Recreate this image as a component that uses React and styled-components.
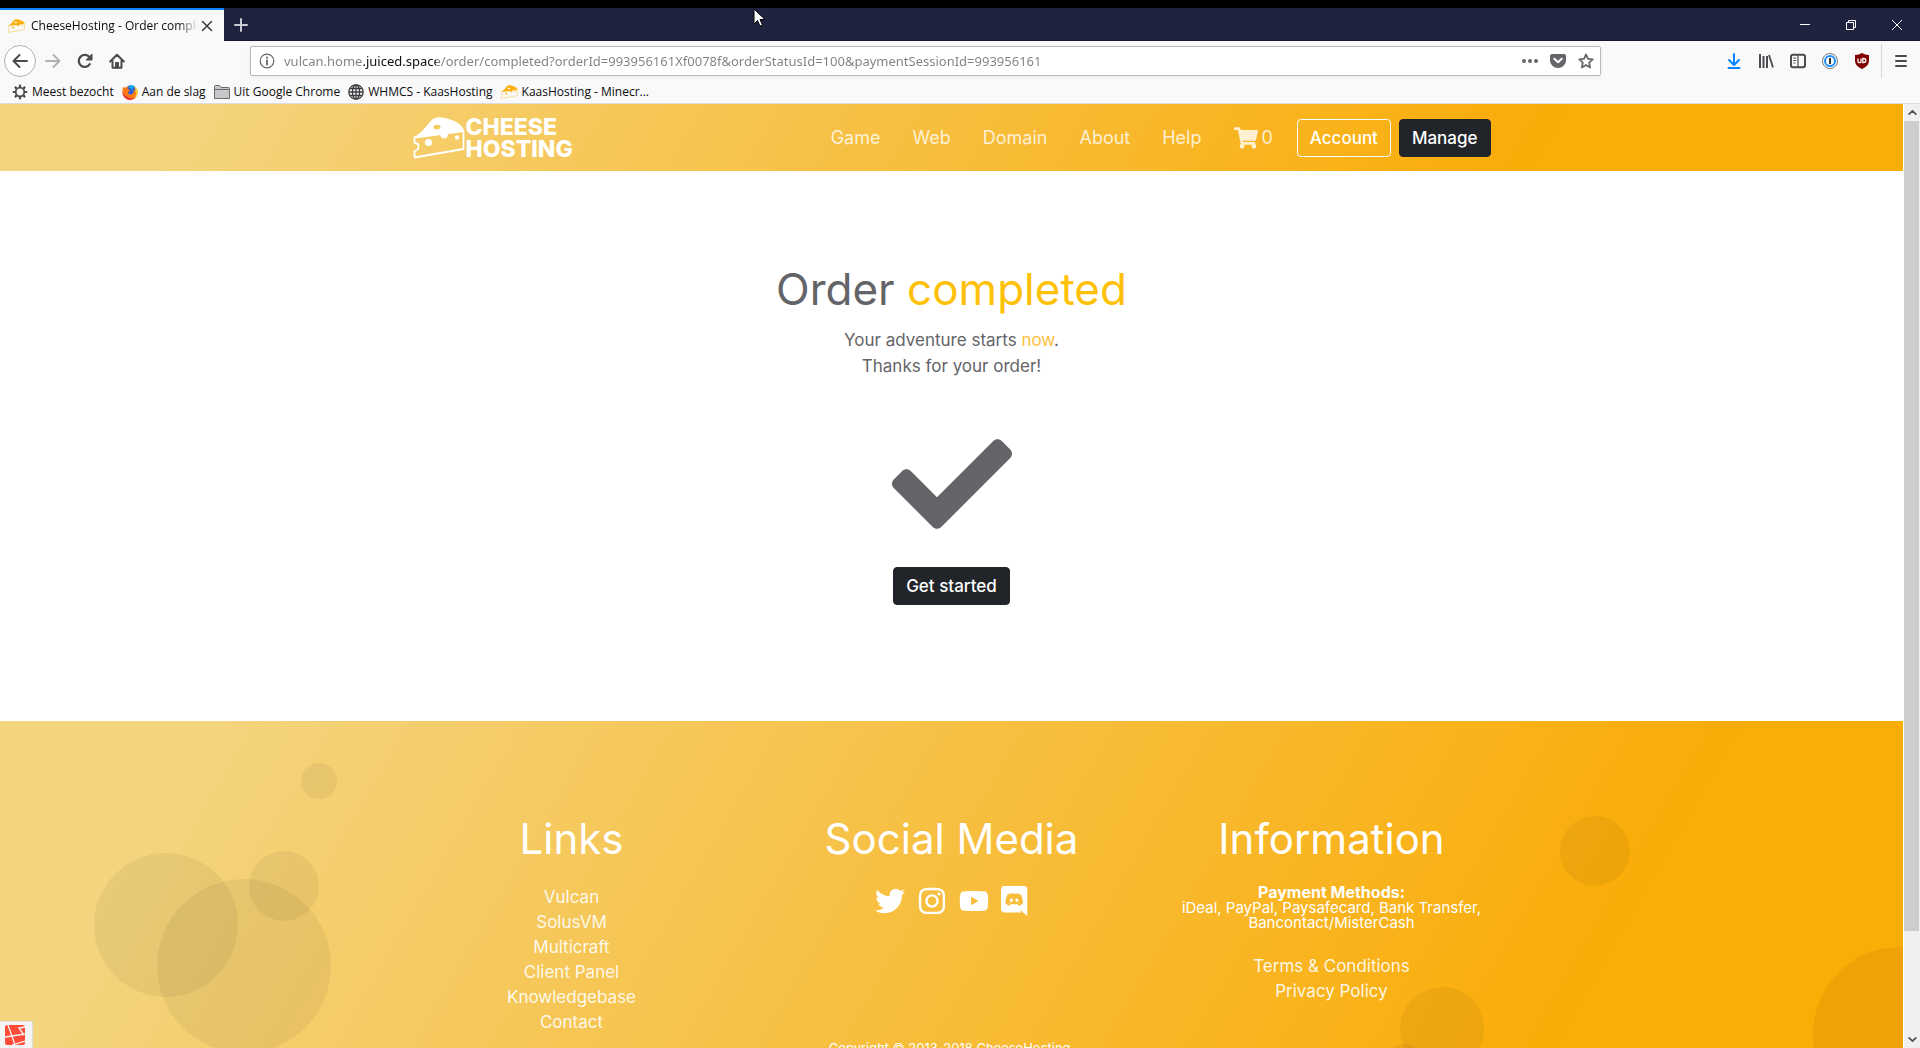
import React from "react";
import styled, { createGlobalStyle, css } from "styled-components";
import {
  FaCheck,
  FaShoppingCart,
  FaTwitter,
  FaInstagram,
  FaYoutube,
} from "react-icons/fa";

const uiFont = `"Open Sans", "Noto Sans", sans-serif`;
const siteFont = `Inter, "Open Sans", sans-serif`;
const cheeseGradient = "linear-gradient(120deg, #f4d47e 10%, #faac07 81%)";

const GlobalStyle = createGlobalStyle`
  * {
    box-sizing: border-box;
  }
  body {
    margin: 0;
    overflow: hidden;
  }
  h1, h2, p, ul {
    margin: 0;
    padding: 0;
    font-weight: 400;
  }
  ul {
    list-style: none;
  }
  a {
    color: inherit;
    text-decoration: none;
  }
  button {
    margin: 0;
    padding: 0;
    border: 0;
    background: none;
    color: inherit;
    font: inherit;
  }
  svg {
    display: block;
    flex: none;
  }
`;

/* browser window */

const Window = styled.div`
  display: flex;
  flex-direction: column;
  height: 100vh;
  border-top: 8px solid #000;
  background: #f9f9fa;
  font-family: ${uiFont};
  font-size: 12px;
  color: #0c0c0d;
`;

const TabStrip = styled.div`
  display: flex;
  flex: none;
  height: 33px;
  background: #202340;
  box-shadow: inset 0 -1px 0 #15172e;
`;

const Tab = styled.div`
  display: flex;
  align-items: center;
  width: 224px;
  padding: 0 8px;
  border-top: 2px solid #0a84ff;
  background: #f9f9fa;
`;

const TabTitle = styled.span`
  flex: 1;
  margin-left: 6px;
  overflow: hidden;
  white-space: nowrap;
  mask-image: linear-gradient(to left, transparent, #000 20px);
`;

const TabButton = styled.button`
  display: flex;
  align-items: center;
  justify-content: center;
  width: ${(props) => props.$width}px;
  color: ${(props) => props.$color};
`;

const WindowControls = styled.div`
  display: flex;
  margin-left: auto;
`;

const Toolbar = styled.div`
  display: flex;
  flex: none;
  align-items: center;
  height: 40px;
  padding: 0 3px 0 4px;
  color: #4a4a4f;
`;

const ToolButton = styled.button`
  display: flex;
  align-items: center;
  justify-content: center;
  width: 32px;
  height: 32px;
  opacity: ${(props) => (props.$faded ? 0.4 : 1)};
  ${(props) =>
    props.$round &&
    css`
      margin-right: 1px;
      border: 1px solid #b1b1b3;
      border-radius: 50%;
      background: #fff;
    `}
`;

const Spring = styled.div`
  flex: none;
  width: 117px;
`;

const Divider = styled.div`
  width: 1px;
  height: 34px;
  margin: 0 3px;
  background: #d7d7db;
`;

const UrlBar = styled.div`
  display: flex;
  flex: 1;
  align-items: center;
  height: 30px;
  padding: 0 0 0 8px;
  border: 1px solid #b8b8ba;
  border-radius: 2px;
  background: #fff;
  box-shadow: 0 1px 4px rgba(0, 0, 0, 0.06);
  color: #66666a;
`;

/* the registered domain is darker than the rest of the address */
const UrlInput = styled.input`
  flex: 1;
  margin-left: 9px;
  padding: 0;
  border: 0;
  outline: 0;
  background: linear-gradient(
    to right,
    #808084 78px,
    #0c0c0d 78px,
    #0c0c0d 152px,
    #808084 152px
  );
  background-clip: text;
  color: transparent;
  font: 13px "Noto Sans", sans-serif;
`;

const UrlAction = styled.button`
  display: flex;
  align-items: center;
  justify-content: center;
  width: 28px;
  height: 28px;
`;

const Bookmarks = styled.ul`
  display: flex;
  flex: none;
  gap: 8px;
  height: 23px;
  padding-left: 12px;
  border-bottom: 1px solid #dcdce0;
`;

const Bookmark = styled.a`
  display: flex;
  align-items: center;
  gap: 4px;
  height: 21px;
  white-space: nowrap;
`;

const Viewport = styled.div`
  display: flex;
  flex: 1;
  min-height: 0;
  overflow: hidden;
`;

const Scrollbar = styled.div`
  display: flex;
  flex: none;
  flex-direction: column;
  width: 17px;
  border-left: 1px solid #fff;
  background: #f0f0f0;
`;

const ScrollArrow = styled.button`
  display: flex;
  align-items: center;
  justify-content: center;
  height: 17px;
  color: #505050;
`;

const ScrollTrack = styled.div`
  flex: 1;
  padding-right: 1px;
`;

const ScrollThumb = styled.div`
  height: 89%;
  background: #cdcdcd;
`;

const Pointer = styled.svg`
  position: absolute;
  top: 8px;
  left: 753px;
`;

/* site */

const Page = styled.div`
  position: relative;
  flex: 1;
  background: #fff;
  font-family: ${siteFont};
  font-size: 17px;
  line-height: 26px;
  color: #636468;
`;

const Navbar = styled.header`
  height: 67px;
  background: ${cheeseGradient};
`;

const NavContainer = styled.div`
  display: flex;
  align-items: center;
  max-width: 1140px;
  height: 67px;
  margin: 0 auto;
  padding: 0 31px;
`;

const Brand = styled.a`
  display: flex;
  align-items: center;
  gap: 1px;
  margin-right: auto;
  color: #fff;
  font-size: 23px;
  font-weight: 800;
  line-height: 22px;
`;

const NavList = styled.ul`
  display: flex;
  gap: 32px;
  margin-right: 24px;
`;

const NavLink = styled.a`
  display: flex;
  align-items: center;
  gap: 4px;
  color: rgba(255, 255, 255, 0.8);
  font-size: 18px;
`;

const Button = styled.button`
  height: 38px;
  padding: 0 12px;
  border: 1px solid ${(props) => (props.$outline ? "#fff" : "#212529")};
  border-radius: 4px;
  background: ${(props) => (props.$outline ? "transparent" : "#212529")};
  color: #fff;
  font-weight: 500;
`;

const NavButtons = styled.div`
  display: flex;
  gap: 8px;
`;

const Main = styled.main`
  display: flex;
  flex-direction: column;
  align-items: center;
  padding: 92px 0 116px;
  text-align: center;
`;

const Title = styled.h1`
  margin-bottom: 12px;
  font-size: 44px;
  line-height: 52px;
`;

const Accent = styled.span`
  color: ${(props) => (props.$soft ? "#fdc040" : "#ffc107")};
`;

const CheckMark = styled(FaCheck)`
  margin: 45px 0 23px;
  font-size: 120px;
`;

const Footer = styled.footer`
  position: relative;
  padding: 93px 0 104px;
  overflow: hidden;
  background: ${cheeseGradient};
  color: #fff;
  text-align: center;
`;

const Bubble = styled.span`
  position: absolute;
  top: ${(props) => props.$y}px;
  left: ${(props) => props.$x}px;
  width: ${(props) => props.$size}px;
  height: ${(props) => props.$size}px;
  border-radius: 50%;
  background: rgba(0, 0, 0, 0.05);
`;

const Columns = styled.div`
  position: relative;
  display: grid;
  grid-template-columns: repeat(3, 1fr);
  max-width: 1140px;
  margin: 0 auto;
`;

const Heading = styled.h2`
  margin-bottom: 21px;
  font-size: 42px;
  line-height: 50px;
`;

const LinkList = styled.ul`
  line-height: 25px;
  color: rgba(255, 255, 255, 0.9);
`;

const Socials = styled.div`
  display: flex;
  justify-content: center;
  gap: 12px;
  padding-top: 1px;

  svg {
    width: auto;
    height: 30px;
  }
`;

const Payments = styled.p`
  margin: 0 30px 24px;
  font-size: 15px;
  line-height: 15px;

  strong {
    display: block;
    font-size: 16px;
  }
`;

const Copyright = styled.p`
  position: relative;
  margin-top: 3px;
  font-size: 13px;
  line-height: 20px;
`;

const DebugBadge = styled.button`
  position: fixed;
  bottom: 0;
  left: 0;
  width: 33px;
  height: 27px;
  padding: 3px 5px;
  border: 1px solid #ddd;
  border-width: 1px 1px 0 0;
  background: #f5f5f5;
`;

const Cheese = ({ width, height, rind = "#fff", body = "#fff", hole = "#f5cb62" }) => (
  <svg width={width} height={height} viewBox="0 0 52 42">
    <path d="M1.5 20.5V26c3 0 4 1.500 4 3.500s-1.500 4-4 4.500v6.500l49-8.500V14z" fill="none" stroke={body} strokeWidth="1.800" strokeLinejoin="round" />
    <path d="M1 20.500 8 15 C11 13 16 5 20 2 C23 0 28 -.5 32 1 C42 3 50 8 51 14 L35 16.500 C36 23 27 23 27.500 17.500 Z" fill={rind} />
    <ellipse cx="24" cy="10" rx="3.500" ry="2.300" fill={hole} />
    <circle cx="15.500" cy="25.500" r="3.600" fill={body} />
    <circle cx="44" cy="20.500" r="2.200" fill={body} />
  </svg>
);

const Favicon = () => (
  <Cheese width={17} height={14} rind="#fbb10f" body="#f9cc62" hole="#fff" />
);

const Stroke = ({ size = 16, width = 2, children }) => (
  <svg width={size} height={size} viewBox="0 0 16 16" fill="none" stroke="currentColor" strokeWidth={width} strokeLinecap="round" strokeLinejoin="round">
    {children}
  </svg>
);

const GearIcon = () => (
  <svg width="16" height="16" viewBox="0 0 16 16" fill="none" stroke="#4a4a4f">
    <circle cx="8" cy="8" r="4.300" strokeWidth="1.800" />
    <path
      strokeWidth="2.200"
      d="M8 .8V3M8 13v2.200M.8 8H3M13 8h2.200M2.900 2.900l1.600 1.600M11.500 11.500l1.600 1.600M2.900 13.100l1.600-1.600M11.500 4.500l1.600-1.600"
    />
  </svg>
);

const FirefoxIcon = () => (
  <svg width="16" height="16" viewBox="0 0 16 16">
    <circle cx="8.500" cy="7.500" r="6" fill="#2b5fd9" />
    <path d="M7 1.500c2-1 4.500-.5 6 1l-3 3c-1-1-2-1.500-3-1z" fill="#19a7f0" />
    <path d="M1.500 2.500C2 3.500 2.500 3.800 3.500 3.700c1-.8 2-1 3-.7L5.500 5l2.500 1c-.5 1.500-2 1.500-2 2.500 0 1.500 2 2.500 4 1.500 2-1 2-3 1-4.500 1.500.5 2 1.500 2.200 2.500.4-2 0-4-1.200-5.500C15 4 16 6.500 15.700 9c-.4 4-3.700 6.800-7.700 6.800S.5 12.500.4 8.500C.3 6 .7 4 1.500 2.500z" fill="#ff7a16" />
    <path d="M12.500 2.500C15 4 16 6.500 15.700 9c-.2 2-1.200 3.800-2.700 5 1-2.500 1.500-4.500.2-6 .4-2 .4-4-.7-5.500z" fill="#ffd23a" />
    <path d="M.5 8c.2 4.500 3.500 7.800 7.500 7.800 2 0 3.700-.6 5-1.800-5 1.500-10-.5-12.500-6z" fill="#e5233e" />
  </svg>
);

const FolderIcon = () => (
  <svg width="16" height="14" viewBox="0 0 16 14" fill="#c8c8ca" stroke="#6a6a6e">
    <path d="M.5 13.500V1.500q0-1 1-1h4l1.500 2h7.500q1 0 1 1v10z" />
    <path d="M.5 4.500h15" />
  </svg>
);

const GlobeIcon = () => (
  <svg width="16" height="16" viewBox="0 0 16 16" fill="none" stroke="#3e3e42" strokeWidth="1.300">
    <circle cx="8" cy="8" r="7.200" />
    <ellipse cx="8" cy="8" rx="3.600" ry="7.200" />
    <path d="M8 1v14M1 8h14M2 4.500h12M2 11.500h12" />
  </svg>
);

/* the older speech bubble logo, which the icon package has dropped */
const DiscordIcon = () => (
  <svg viewBox="0 0 448 512" fill="currentColor">
    <path d="M297.216 243.2c0 15.616-11.52 28.416-26.112 28.416-14.336 0-26.112-12.8-26.112-28.416s11.52-28.416 26.112-28.416c14.592 0 26.112 12.8 26.112 28.416zm-119.552-28.416c-14.592 0-26.112 12.8-26.112 28.416s11.776 28.416 26.112 28.416c14.592 0 26.112-12.8 26.112-28.416.256-15.616-11.52-28.416-26.112-28.416zM448 52.736V512c-64.494-56.994-43.868-38.128-118.784-107.776l13.568 47.36H52.48C23.552 451.584 0 428.032 0 398.848V52.736C0 23.552 23.552 0 52.48 0h343.04C424.448 0 448 23.552 448 52.736zm-72.96 242.688c0-82.432-36.864-149.248-36.864-149.248-36.864-27.648-71.936-26.88-71.936-26.88l-3.584 4.096c43.52 13.312 63.744 32.512 63.744 32.512-60.811-33.329-132.244-33.335-191.232-7.424-9.472 4.352-15.104 7.424-15.104 7.424s21.248-20.224 67.328-33.536l-2.56-3.072s-35.072-.768-71.936 26.88c0 0-36.864 66.816-36.864 149.248 0 0 21.504 37.12 78.08 38.912 0 0 9.472-11.52 17.152-21.248-32.512-9.728-44.8-30.208-44.8-30.208 3.766 2.636 9.976 6.053 10.496 6.4 43.21 24.198 104.588 32.126 159.744 8.96 8.96-3.328 18.944-8.192 29.44-15.104 0 0-12.8 20.992-46.336 30.464 7.68 9.728 16.896 20.736 16.896 20.736 56.576-1.792 78.336-38.912 78.336-38.912z" />
  </svg>
);

const bookmarks = [
  { label: "Meest bezocht", icon: <GearIcon /> },
  { label: "Aan de slag", icon: <FirefoxIcon /> },
  { label: "Uit Google Chrome", icon: <FolderIcon /> },
  { label: "WHMCS - KaasHosting", icon: <GlobeIcon /> },
  { label: "KaasHosting - Minecr...", icon: <Favicon /> },
];

const navItems = ["Game", "Web", "Domain", "About", "Help"];

const footerLinks = [
  "Vulcan",
  "SolusVM",
  "Multicraft",
  "Client Panel",
  "Knowledgebase",
  "Contact",
];

const bubbles = [
  { x: 301, y: 42, size: 36 },
  { x: 94, y: 132, size: 144 },
  { x: 249, y: 130, size: 70 },
  { x: 157, y: 158, size: 174 },
  { x: 1560, y: 95, size: 70 },
  { x: 1400, y: 266, size: 84 },
  { x: 1382, y: 323, size: 44 },
  { x: 1813, y: 226, size: 174 },
];

const BrowserTabs = () => (
  <TabStrip>
    <Tab>
      <Favicon />
      <TabTitle>CheeseHosting - Order completed</TabTitle>
      <TabButton $width={18} $color="#3a3a3e" aria-label="Close tab">
        <Stroke size={12}>
          <path d="M2 2l12 12M14 2L2 14" />
        </Stroke>
      </TabButton>
    </Tab>
    <TabButton $width={34} $color="#c9cad4" aria-label="New tab">
      <Stroke size={16}>
        <path d="M8 2v12M2 8h12" />
      </Stroke>
    </TabButton>
    <WindowControls>
      <TabButton $width={46} $color="#fff" aria-label="Minimize">
        <svg width="10" height="10" stroke="currentColor">
          <path d="M0 4.500h10" />
        </svg>
      </TabButton>
      <TabButton $width={46} $color="#fff" aria-label="Restore">
        <svg width="10" height="10" fill="none" stroke="currentColor">
          <path d="M.5 2.500h7v7h-7zM2.500 2.500v-2h7v7h-2" />
        </svg>
      </TabButton>
      <TabButton $width={46} $color="#fff" aria-label="Close">
        <svg width="10" height="10" stroke="currentColor">
          <path d="M0 0l10 10M10 0L0 10" />
        </svg>
      </TabButton>
    </WindowControls>
  </TabStrip>
);

const BrowserToolbar = () => (
  <Toolbar>
    <ToolButton $round aria-label="Back">
      <Stroke>
        <path d="M15 8H1.500M7.500 2l-6 6 6 6" />
      </Stroke>
    </ToolButton>
    <ToolButton $faded aria-label="Forward">
      <Stroke>
        <path d="M1 8h13.500M8.500 2l6 6-6 6" />
      </Stroke>
    </ToolButton>
    <ToolButton aria-label="Reload">
      <Stroke width={2.2}>
        <path d="M12.800 11.200A6 6 0 1 1 12.500 4.200" />
        <path d="M15 1.500v5.500H9.500z" fill="currentColor" strokeWidth="1" />
      </Stroke>
    </ToolButton>
    <ToolButton aria-label="Home">
      <Stroke>
        <path d="M1.200 8.500L8 1.700l6.800 6.800M3.500 8v6.800h9V8" />
        <path d="M7 14.500V10h2v4.500z" />
      </Stroke>
    </ToolButton>
    <Spring />
    <UrlBar>
      <Stroke width={1.2}>
        <circle cx="8" cy="8" r="6.800" />
        <path d="M8 7.500v4M8 4.500v.4" strokeWidth="1.800" />
      </Stroke>
      <UrlInput
        aria-label="Address"
        defaultValue="vulcan.home.juiced.space/order/completed?orderId=993956161Xf0078f&orderStatusId=100&paymentSessionId=993956161"
      />
      <UrlAction aria-label="Page actions">
        <svg width="16" height="16" viewBox="0 0 16 16" fill="currentColor">
          <circle cx="2" cy="8" r="2" />
          <circle cx="8" cy="8" r="2" />
          <circle cx="14" cy="8" r="2" />
        </svg>
      </UrlAction>
      <UrlAction aria-label="Save to Pocket">
        <svg width="16" height="16" viewBox="0 0 16 16">
          <path d="M2 1h12q2 0 2 2v4.500a8 7.500 0 0 1-16 0V3q0-2 2-2z" fill="currentColor" />
          <path d="M4.300 5.800L8 9.300l3.700-3.500" fill="none" stroke="#fff" strokeWidth="2" strokeLinecap="round" strokeLinejoin="round" />
        </svg>
      </UrlAction>
      <UrlAction aria-label="Bookmark this page">
        <Stroke width={1.8}>
          <path d="M8 1.500l2 4.300 4.700.6-3.500 3.200.9 4.900L8 12l-4.100 2.500.9-4.900L1.300 6.400 6 5.800z" />
        </Stroke>
      </UrlAction>
    </UrlBar>
    <Spring />
    <ToolButton aria-label="Downloads">
      <svg width="16" height="16" viewBox="0 0 16 16" fill="none" stroke="#0a84ff" strokeWidth="2" strokeLinecap="round" strokeLinejoin="round">
        <path d="M8 1v10.500M3 7l5 5 5-5M2.500 15h11" />
      </svg>
    </ToolButton>
    <ToolButton aria-label="Library">
      <svg width="16" height="16" viewBox="0 0 16 16" fill="none" stroke="currentColor" strokeWidth="2">
        <path d="M2 1v14M5.500 3v12M9 3v12" />
        <path d="M11 2l4 12.500" strokeWidth="1.800" />
      </svg>
    </ToolButton>
    <ToolButton aria-label="Sidebar">
      <Stroke>
        <rect x="1" y="1.800" width="14" height="12.400" rx="2" />
        <path d="M8 2v12M3.800 5h1.800M3.800 7.500h1.800M3.800 10h1" strokeWidth="1.200" />
      </Stroke>
    </ToolButton>
    <ToolButton aria-label="Passwords">
      <svg width="16" height="16" viewBox="0 0 16 16">
        <circle cx="8" cy="8" r="7.500" fill="#fff" stroke="#77777b" />
        <circle cx="8" cy="8" r="5" fill="#fff" stroke="#1a8cff" strokeWidth="2" />
        <path d="M8 5v6" stroke="#333" strokeWidth="2" />
      </svg>
    </ToolButton>
    <ToolButton aria-label="Content blocker">
      <svg width="16" height="16" viewBox="0 0 16 16">
        <path d="M8 0q3 2 7 2v5c0 5-3 7-7 9-4-2-7-4-7-9V2q4 0 7-2z" fill="#800000" />
        <path d="M4 5.500v3q0 1.200 1.500 1.200T7 8.500v-3M8.800 5.500v4h1a2 2 0 0 0 0-4z" fill="none" stroke="#fff" strokeWidth="1.300" />
      </svg>
    </ToolButton>
    <Divider />
    <ToolButton aria-label="Menu">
      <Stroke>
        <path d="M3 3h10M3 8h10M3 13h10" />
      </Stroke>
    </ToolButton>
  </Toolbar>
);

const SiteNav = () => (
  <Navbar>
    <NavContainer>
      <Brand href="#">
        <Cheese width={52} height={42} />
        <span>
          CHEESE
          <br />
          HOSTING
        </span>
      </Brand>
      <NavList>
        {navItems.map((item) => (
          <li key={item}>
            <NavLink href="#">{item}</NavLink>
          </li>
        ))}
        <li>
          <NavLink href="#" aria-label="Cart">
            <FaShoppingCart size={24} />0
          </NavLink>
        </li>
      </NavList>
      <NavButtons>
        <Button $outline>Account</Button>
        <Button>Manage</Button>
      </NavButtons>
    </NavContainer>
  </Navbar>
);

const SiteFooter = () => (
  <Footer>
    {bubbles.map(({ x, y, size }) => (
      <Bubble key={`${x}-${y}`} $x={x} $y={y} $size={size} />
    ))}
    <Columns>
      <section>
        <Heading>Links</Heading>
        <LinkList>
          {footerLinks.map((link) => (
            <li key={link}>
              <a href="#">{link}</a>
            </li>
          ))}
        </LinkList>
      </section>
      <section>
        <Heading>Social Media</Heading>
        <Socials>
          <a href="#" aria-label="Twitter">
            <FaTwitter />
          </a>
          <a href="#" aria-label="Instagram">
            <FaInstagram />
          </a>
          <a href="#" aria-label="YouTube">
            <FaYoutube />
          </a>
          <a href="#" aria-label="Discord">
            <DiscordIcon />
          </a>
        </Socials>
      </section>
      <section>
        <Heading>Information</Heading>
        <Payments>
          <strong>Payment Methods:</strong>
          iDeal, PayPal, Paysafecard, Bank Transfer, Bancontact/MisterCash
        </Payments>
        <LinkList>
          <li>
            <a href="#">Terms &amp; Conditions</a>
          </li>
          <li>
            <a href="#">Privacy Policy</a>
          </li>
        </LinkList>
      </section>
    </Columns>
    <Copyright>Copyright © 2013-2018 CheeseHosting.</Copyright>
  </Footer>
);

const App = () => (
  <>
    <GlobalStyle />
    <Window>
      <BrowserTabs />
      <BrowserToolbar />
      <Bookmarks>
        {bookmarks.map(({ label, icon }) => (
          <li key={label}>
            <Bookmark href="#">
              {icon}
              {label}
            </Bookmark>
          </li>
        ))}
      </Bookmarks>
      <Viewport>
        <Page>
          <SiteNav />
          <Main>
            <Title>
              Order <Accent>completed</Accent>
            </Title>
            <p>
              Your adventure starts <Accent $soft>now</Accent>.
              <br />
              Thanks for your order!
            </p>
            <CheckMark />
            <Button>Get started</Button>
          </Main>
          <SiteFooter />
        </Page>
        <Scrollbar>
          <ScrollArrow aria-label="Scroll up">
            <Stroke size={9} width={3}>
              <path d="M2 11l6-6 6 6" />
            </Stroke>
          </ScrollArrow>
          <ScrollTrack>
            <ScrollThumb />
          </ScrollTrack>
          <ScrollArrow aria-label="Scroll down">
            <Stroke size={9} width={3}>
              <path d="M2 5l6 6 6-6" />
            </Stroke>
          </ScrollArrow>
        </Scrollbar>
      </Viewport>
    </Window>
    <DebugBadge aria-label="Debug bar">
      <svg width="20" height="20" viewBox="0 0 20 20">
        <rect width="20" height="20" rx="2" fill="#ff4b38" />
        <path d="M3 0l7 20M0 12l20-3M20 2l-6 1 5 7M7 20l13-4" fill="none" stroke="#f5f5f5" strokeWidth="1.300" />
      </svg>
    </DebugBadge>
    <Pointer width="14" height="20" viewBox="0 0 14 20">
      <path d="M1 1v15l3.500-3.500L7 18l2.500-1-2.500-5.500h5z" fill="#fff" stroke="#000" />
    </Pointer>
  </>
);

export default App;
